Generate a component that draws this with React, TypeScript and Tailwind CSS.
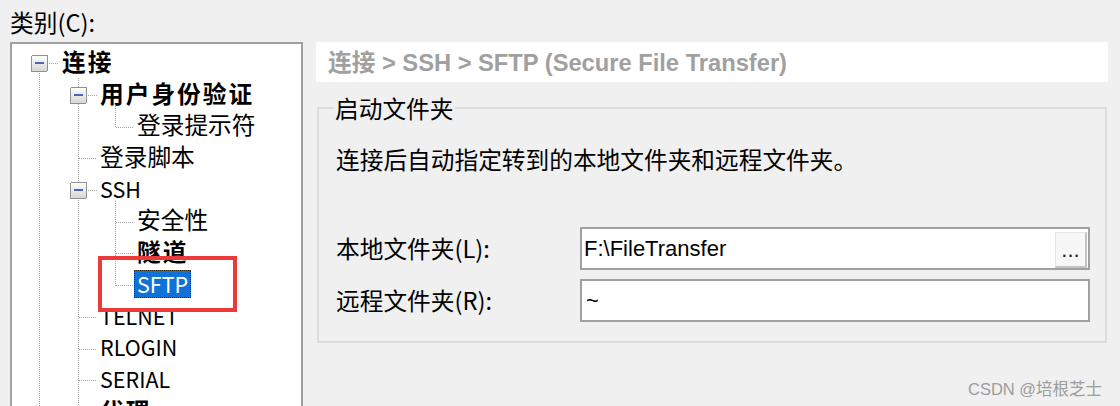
import React from "react";

type Row = { label: string; level: 0 | 1 | 2; bold?: boolean; selected?: boolean; latin?: boolean };

const rows: Row[] = [
  { label: "连接", level: 0, bold: true },
  { label: "用户身份验证", level: 1, bold: true },
  { label: "登录提示符", level: 2 },
  { label: "登录脚本", level: 1 },
  { label: "SSH", level: 1, latin: true },
  { label: "安全性", level: 2 },
  { label: "隧道", level: 2, bold: true },
  { label: "SFTP", level: 2, selected: true, latin: true },
  { label: "TELNET", level: 1, latin: true },
  { label: "RLOGIN", level: 1, latin: true },
  { label: "SERIAL", level: 1, latin: true },
  { label: "代理", level: 1, bold: true },
];

const padCls = ["pl-[47px]", "pl-[85px]", "pl-[122px]"];

const cy = (i: number) => Math.round(19.2 + 31.7 * i) + 0.5;
const X0 = 27.5;
const X1 = 66.5;
const X2 = 103.5;

function Dot({ x1, y1, x2, y2 }: { x1: number; y1: number; x2: number; y2: number }) {
  return (
    <line
      x1={x1}
      y1={y1}
      x2={x2}
      y2={y2}
      stroke="#a0a0a0"
      strokeWidth={1}
      strokeDasharray="1 1"
      shapeRendering="crispEdges"
    />
  );
}

function ExpBox({ cx, cyv }: { cx: number; cyv: number }) {
  return (
    <g>
      <rect x={cx - 8} y={cyv - 8} width={16} height={16} rx={1.5} fill="url(#bxg)" stroke="#919191" shapeRendering="crispEdges" />
      <rect x={cx - 4.5} y={cyv - 1.5} width={9} height={2} fill="#4a63bd" shapeRendering="crispEdges" />
    </g>
  );
}

function TreeLines() {
  return (
    <svg className="absolute left-0 top-0 w-full h-full pointer-events-none" xmlns="http://www.w3.org/2000/svg">
      <defs>
        <linearGradient id="bxg" x1="0" y1="0" x2="0" y2="1">
          <stop offset="0" stopColor="#ffffff" />
          <stop offset="1" stopColor="#d6d6d6" />
        </linearGradient>
      </defs>
      <Dot x1={X0} y1={cy(0) + 9} x2={X0} y2={420} />
      <Dot x1={X0 + 9} y1={cy(0)} x2={47} y2={cy(0)} />
      <Dot x1={X1} y1={cy(0) + 14} x2={X1} y2={420} />
      <Dot x1={X1 + 9} y1={cy(1)} x2={85} y2={cy(1)} />
      <Dot x1={X1 + 9} y1={cy(4)} x2={85} y2={cy(4)} />
      {[3, 8, 9, 10, 11].map((i) => (
        <Dot key={i} x1={X1} y1={cy(i)} x2={85} y2={cy(i)} />
      ))}
      <Dot x1={X2} y1={cy(1) + 10} x2={X2} y2={cy(2)} />
      <Dot x1={X2} y1={cy(2)} x2={121} y2={cy(2)} />
      <Dot x1={X2} y1={cy(4) + 10} x2={X2} y2={cy(7)} />
      {[5, 6, 7].map((i) => (
        <Dot key={i} x1={X2} y1={cy(i)} x2={121} y2={cy(i)} />
      ))}
      <ExpBox cx={X0} cyv={cy(0)} />
      <ExpBox cx={X1} cyv={cy(1)} />
      <ExpBox cx={X1} cyv={cy(4)} />
    </svg>
  );
}

export default function App() {
  return (
    <div className="w-[1120px] h-[406px] bg-[#f0f0f0] relative overflow-hidden flex text-black font-['Noto_Sans_CJK_SC',sans-serif]">
      {/* Left column */}
      <div className="w-[316px] shrink-0 pl-[10px] flex flex-col min-h-0">
        <div className="h-[42px] shrink-0 pt-[7px] text-[23.7px] leading-[30px] whitespace-nowrap">类别(C):</div>
        <div className="w-[293px] flex-1 min-h-0 overflow-hidden border-2 border-b-0 border-[#a0a0a0] bg-white relative pt-[2px]">
          <TreeLines />
          {rows.map((r, i) => (
            <div key={i} className={`h-[31.7px] shrink-0 flex items-center relative ${padCls[r.level]}`}>
              <span
                className={`h-[28px] flex items-center leading-none whitespace-nowrap ${
                  r.latin ? "text-[21.5px]" : "text-[23.7px]"
                } ${r.bold ? "font-bold tracking-[2px]" : ""} ${
                  r.selected
                    ? "px-[2px] bg-[#1072d6] text-white border border-dotted border-[#3b2a12]"
                    : "px-[3px]"
                }`}
              >
                {r.label}
              </span>
            </div>
          ))}
          <div className="absolute left-[86px] top-[212px] w-[139px] h-[56px] border-4 border-[#ec3a3a] pointer-events-none" />
        </div>
      </div>

      {/* Right column */}
      <div className="w-[792px] shrink-0 pt-[42px] flex flex-col">
        <div className="h-[40px] shrink-0 bg-white flex items-center pl-[12px] pt-[4px] font-['Liberation_Sans','Noto_Sans_CJK_SC',sans-serif] font-bold text-[23.7px] leading-none text-[#a0a0a0] whitespace-nowrap">
          连接 &gt; SSH &gt; SFTP (Secure File Transfer)
        </div>

        <div className="mt-[25px] ml-[1px] w-[790px] h-[236px] shrink-0 border-2 border-[#dcdcdc] relative pl-[17px] flex flex-col">
          <div className="absolute left-[14px] top-[-15px] px-[2px] bg-[#f0f0f0] text-[23.7px] leading-[28px] whitespace-nowrap">
            启动文件夹
          </div>

          <div className="mt-[34px] h-[32px] text-[23.7px] leading-[32px] whitespace-nowrap">
            连接后自动指定转到的本地文件夹和远程文件夹。
          </div>

          <div className="mt-[52px] h-[43px] flex items-center">
            <div className="w-[244px] shrink-0 text-[23.7px] leading-none whitespace-nowrap">本地文件夹(L):</div>
            <div className="w-[510px] h-[43px] border-2 border-[#a0a0a0] bg-white flex items-center pl-[2px]">
              <span className="font-['Liberation_Sans',sans-serif] text-[22px] leading-none whitespace-nowrap">F:\FileTransfer</span>
              <div className="ml-auto mr-[1px] self-end w-[32px] h-[36px] bg-[#f7f7f7] border-t border-l border-t-[#e6e6e6] border-l-[#e6e6e6] border-r-2 border-b-2 border-r-[#c2c2c2] border-b-[#c2c2c2] flex items-end justify-center pb-[5px] font-['Liberation_Sans',sans-serif] text-[22px] leading-none text-[#202020]">
                ...
              </div>
            </div>
          </div>

          <div className="mt-[9px] h-[43px] flex items-center">
            <div className="w-[244px] shrink-0 text-[23.7px] leading-none whitespace-nowrap">远程文件夹(R):</div>
            <div className="w-[510px] h-[43px] border-2 border-[#a0a0a0] bg-white flex items-center pl-[4px]">
              <span className="font-['Liberation_Sans',sans-serif] text-[22px] leading-none">~</span>
            </div>
          </div>
        </div>
      </div>

      <div className="absolute left-[968px] top-[379px] text-[16.5px] leading-[20px] text-[#9c9c9c] whitespace-nowrap font-['Liberation_Sans','Noto_Sans_CJK_SC',sans-serif]">
        CSDN @培根芝士
      </div>
    </div>
  );
}
